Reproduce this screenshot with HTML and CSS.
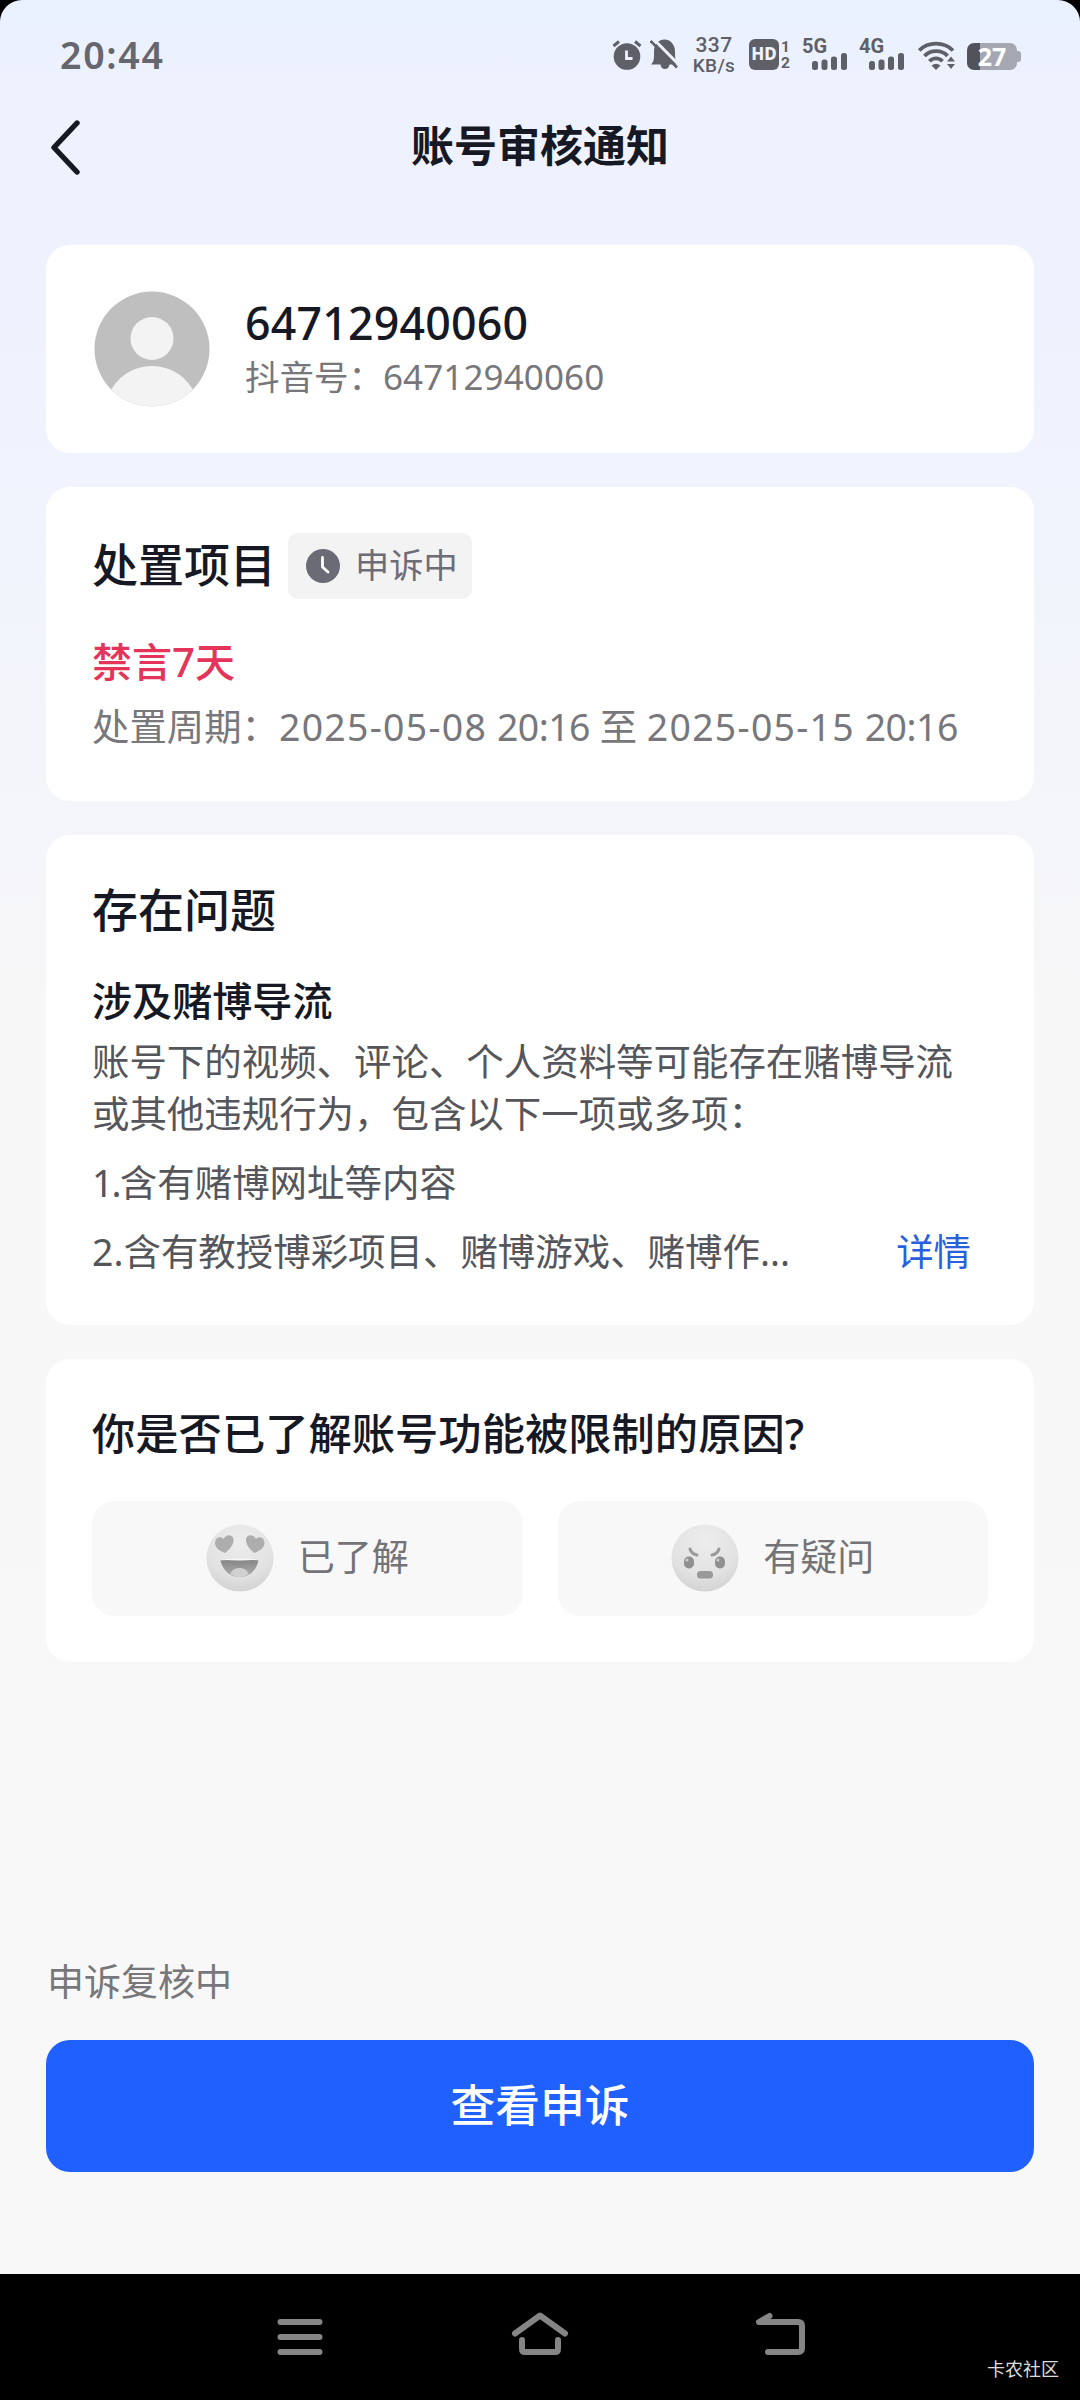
FILE: index.html
```html
<!DOCTYPE html>
<html lang="zh-CN">
<head>
<meta charset="utf-8">
<title>账号审核通知</title>
<link rel="stylesheet" href="styles.css">
</head>
<body>
<div class="phone">
  <main class="screen">
    <header class="status">
      <span class="time">20:44</span>
      <div class="indicators">
        <svg class="ico-alarm" width="30" height="30" viewBox="0 0 30 30"><circle cx="15" cy="16.5" r="13.3" fill="#5f5f68"/><path d="M1.500 6 7 1.500M28.500 6 23 1.500" stroke="#5f5f68" stroke-width="3"/><path d="M14.500 10.500v8h6" fill="none" stroke="#eef1fe" stroke-width="2.800"/></svg>
        <svg class="ico-mute" width="28" height="31" viewBox="0 0 28 31"><path d="M1 25.500C4.500 22 4 19 4 12.500 4 4.500 9 .5 14.500 .5S25 5 25 12.500c0 7 .5 10 3 13h-8.500c-.5 6-8.500 6-9 0z" fill="#5f5f68"/><path d="M3 -.5 29.500 26.500" stroke="#eef1fe" stroke-width="3"/><path d="M.5 2 27 28.500" stroke="#5f5f68" stroke-width="2.600"/></svg>
        <div class="speed"><span class="speed-num">337</span><span class="speed-unit">KB/s</span></div>
        <div class="hd"><span class="hd-box">HD</span><span class="hd-sims"><i>1</i><i>2</i></span></div>
        <div class="net"><span class="net-type">5G</span><svg width="36" height="17" viewBox="0 0 36 17" fill="#5f5f68"><rect x="0" y="8" width="6" height="9" rx="2.500"/><rect x="9.500" y="6.500" width="6" height="10.500" rx="2.500"/><rect x="19" y="3.500" width="6" height="13.500" rx="2.500"/><rect x="29" y="0" width="6" height="17" rx="2.500"/></svg></div>
        <div class="net net-4g"><span class="net-type">4G</span><svg width="36" height="17" viewBox="0 0 36 17" fill="#5f5f68"><rect x="0" y="8" width="6" height="9" rx="2.500"/><rect x="9.500" y="6.500" width="6" height="10.500" rx="2.500"/><rect x="19" y="3.500" width="6" height="13.500" rx="2.500"/><rect x="29" y="0" width="6" height="17" rx="2.500"/></svg></div>
        <svg class="ico-wifi" width="37" height="29" viewBox="0 0 37 29"><g fill="none" stroke="#5f5f68" stroke-width="3.800"><path d="M1.200 9.500C10 .2 26 .2 35 9.500"/><path d="M6.500 15C12.500 8.500 24 8.500 29.500 15"/><path d="M11.500 20.300C15 16.300 21 16.300 24.500 20.300"/></g><path d="M13.500 24.500q4.500-3.500 9 0L18 29z" fill="#5f5f68"/><path d="m33 15.500 4 5h-8zM33 28l4-5h-8z" fill="#5f5f68"/></svg>
        <div class="battery"><span class="battery-body">27</span><span class="battery-cap"></span></div>
      </div>
    </header>
    <nav class="titlebar">
      <svg class="back" width="32" height="56" viewBox="0 0 32 56"><path d="M27 4 4 28.500 27 53" fill="none" stroke="#161823" stroke-width="5.400" stroke-linecap="round" stroke-linejoin="round"/></svg>
      <h1>账号审核通知</h1>
    </nav>

    <section class="card profile">
      <svg class="avatar" width="116" height="116" viewBox="0 0 116 116"><defs><clipPath id="disc"><circle cx="58" cy="58" r="57.500"/></clipPath></defs><g clip-path="url(#disc)"><rect width="116" height="116" fill="#bfbfbf"/><circle cx="58" cy="47.500" r="21.500" fill="#f3f3f3"/><circle cx="58" cy="122" r="47" fill="#f3f3f3"/></g></svg>
      <div class="who"><strong>64712940060</strong><span>抖音号：<b>64712940060</b></span></div>
    </section>

    <section class="card penalty">
      <div class="heading-row">
        <h2>处置项目</h2>
        <span class="badge"><svg width="34" height="34" viewBox="0 0 34 34"><circle cx="17" cy="17" r="17" fill="#6a6b75"/><path d="M16.500 8.500v9.500l5.500 5" fill="none" stroke="#fff" stroke-width="2.800" stroke-linecap="round" stroke-linejoin="round"/></svg><span>申诉中</span></span>
      </div>
      <p class="ban">禁言7天</p>
      <p class="period">处置周期：<span class="date">2025-05-08</span> <span class="clock">20:16</span> 至 <span class="date">2025-05-15</span> <span class="clock">20:16</span></p>
    </section>

    <section class="card issues">
      <h2>存在问题</h2>
      <h3>涉及赌博导流</h3>
      <p class="desc">账号下的视频、评论、个人资料等可能存在赌博导流<br>或其他违规行为，包含以下一项或多项：</p>
      <p class="item"><span class="one">1.</span>含有赌博网址等内容</p>
      <div class="item last"><span>2.含有教授博彩项目、赌博游戏、赌博作...</span><a class="detail">详情</a></div>
    </section>

    <section class="card survey">
      <h2>你是否已了解账号功能被限制的原因?</h2>
      <div class="choices">
        <button class="choice"><svg width="68" height="68" viewBox="0 0 68 68"><defs><radialGradient id="face" cx=".5" cy=".25" r=".8"><stop offset="0" stop-color="#ededed"/><stop offset=".65" stop-color="#e2e2e2"/><stop offset="1" stop-color="#d0d0d0"/></radialGradient><linearGradient id="mouth" x2="0" y2="1"><stop offset="0" stop-color="#858585"/><stop offset="1" stop-color="#b0b0b0"/></linearGradient></defs><circle cx="34" cy="34" r="33.500" fill="url(#face)"/><path d="M19 29C12 26.500 7.500 22 9.500 16.500c1.500-4 6-4 8-1.500 2-4.500 7.500-5 9.500-1.500 2 5-2 11-8 15.500z" fill="#adadad"/><path d="M48.500 29c7-2.500 11.500-7 9.500-12.500-1.500-4-6-4-8-1.500-2-4.500-7.500-5-9.500-1.500-2 5 2 11 8 15.500z" fill="#adadad"/><path d="M14.500 36.500c13-1.300 26-1.300 38 0C50 47 43 53 33.500 53S17 47 14.500 36.500z" fill="url(#mouth)"/><path d="M14.500 35.500c13-1.300 26-1.300 38 0-12 1.300-25 1.300-38 0z" fill="#f8f8f8"/><path d="M24.500 50c2-8 16-8 18 0-5 4-13 4-18 0z" fill="#d0d0d0"/></svg><span>已了解</span></button>
        <button class="choice"><svg width="68" height="68" viewBox="0 0 68 68"><circle cx="34" cy="34" r="33.500" fill="url(#face)"/><path d="M19 25q1.500 5 7 6M48 25q-1.500 5-7 6" fill="none" stroke="#9a9a9a" stroke-width="3" stroke-linecap="round"/><rect x="13" y="32.500" width="10" height="12" rx="4.800" fill="#909090"/><rect x="44" y="32.500" width="10" height="12" rx="4.800" fill="#909090"/><circle cx="16" cy="36" r="1.500" fill="#ccc"/><circle cx="47" cy="36" r="1.500" fill="#ccc"/><rect x="26" y="47" width="16" height="7.500" rx="3.500" fill="#999"/></svg><span>有疑问</span></button>
      </div>
    </section>

    <footer class="action">
      <p>申诉复核中</p>
      <button class="primary">查看申诉</button>
    </footer>
  </main>
  <div class="navbar">
    <svg width="48" height="48" viewBox="0 0 48 48"><path d="M4.500 12h39M4.500 27h39M4.500 42h39" stroke="#858585" stroke-width="6" stroke-linecap="round"/></svg>
    <svg width="60" height="48" viewBox="0 0 60 48"><path d="M5 23.500 30 5.500l25 18M12 30v9q0 3 3 3h30q3 0 3-3v-9" fill="none" stroke="#858585" stroke-width="6" stroke-linecap="round" stroke-linejoin="round"/></svg>
    <svg width="52" height="48" viewBox="0 0 52 48"><path d="M14.500 6 4 12h39q4 0 4 4v22q0 4-4 4H13" fill="none" stroke="#858585" stroke-width="6" stroke-linecap="round" stroke-linejoin="round"/></svg>
  </div>
  <span class="watermark">卡农社区</span>
</div>
</body>
</html>
```
FILE: styles.css
```css
* { box-sizing: border-box; margin: 0; padding: 0; }
body { background: #000; font-family: "Noto Sans", "Noto Sans CJK SC", sans-serif; color: #161823; }
svg { display: block; flex: none; }
i { font-style: normal; }
button { border: 0; font: inherit; }

.phone { position: relative; width: 1080px; height: 2400px; display: flex; flex-direction: column; background: #000; overflow: hidden; }
.screen { height: 2274px; display: flex; flex-direction: column; padding: 0 46px; border-radius: 22px 22px 0 0;
  background: linear-gradient(#e9f1ff 0, #eef1fe 85px, #f0f3fe 420px, #f7f7f8 1000px, #f8f8f8 100%); }

.status { height: 110px; display: flex; justify-content: space-between; color: #5f5f68; margin-right: -26px; }
.time { margin: 36px 0 0 14px; font-size: 37.500px; line-height: 38px; font-weight: 600; letter-spacing: 1.700px; color: #66666e; }
.indicators { display: flex; align-items: flex-start; width: 448px; padding-top: 39px; }
.ico-alarm { margin-top: 1px; }
.ico-mute { margin-left: 8px; }
.speed { margin: -4px 0 0 13px; width: 46px; display: flex; flex-direction: column; align-items: center; font-family: Roboto, sans-serif; font-weight: 500; white-space: nowrap; }
.speed-num { font-size: 21px; line-height: 20px; letter-spacing: .4px; }
.speed-unit { font-size: 19px; line-height: 21px; letter-spacing: .3px; }
.hd { display: flex; margin-left: 12px; }
.hd-box { width: 30px; height: 31px; border-radius: 6px; background: #5f5f68; color: #eef1fe; font-size: 17px; line-height: 30px; font-weight: 800; text-align: center; }
.hd-sims { display: flex; flex-direction: column; width: 13px; padding-left: 2px; font-family: Roboto, sans-serif; font-size: 15.500px; line-height: 16px; font-weight: 700; }
.net { width: 46px; margin-left: 10px; display: flex; flex-direction: column; }
.net-4g { margin-left: 11px; }
.net-type { font-family: Roboto, sans-serif; font-size: 20px; font-weight: 700; line-height: 14px; }
.net svg { margin-left: 10px; }
.ico-wifi { margin: 2px 0 0 13px; }
.battery { display: flex; align-items: center; margin: 4px 0 0 12px; }
.battery-body { width: 50px; height: 27px; border-radius: 7px; background: linear-gradient(90deg, #52525b 13px, #a5a8b2 13px); color: #fff; font-size: 25px; line-height: 27px; font-weight: 700; text-align: center; }
.battery-cap { width: 4px; height: 11px; border-radius: 0 3px 3px 0; background: #a5a8b2; }

.titlebar { height: 135px; display: grid; grid-template-columns: 40px 1fr 40px; align-items: start; padding-top: 8px; }
.back { margin: 1px 0 0 4px; }
h1 { font-size: 43px; line-height: 56px; font-weight: 700; text-align: center; }

.card { background: #fff; border-radius: 24px; padding: 0 46px; margin-bottom: 34px; white-space: nowrap; }
h2 { font-weight: 500; font-size: 46px; line-height: 60px; }

.profile { height: 208px; display: flex; align-items: center; gap: 35px; }
.avatar { margin-left: 2px; }
.who { display: flex; flex-direction: column; margin-top: -4px; }
.who strong { font-size: 44.700px; line-height: 60px; font-weight: 500; letter-spacing: .2px; }
.who span { font-size: 34.500px; line-height: 48px; color: #77777b; }
.who b { font-weight: 400; font-size: 35px; letter-spacing: .1px; }

.penalty { height: 314px; padding-top: 46px; }
.heading-row { display: flex; align-items: center; gap: 12px; }
.heading-row h2 { margin-top: -4px; }
.badge { display: flex; align-items: center; gap: 15px; height: 66px; width: 184px; padding-left: 18px; border-radius: 10px; background: #f3f3f4; color: #6c6d76; font-size: 34.200px; }
.badge span { margin-top: -6px; }
.ban { font-size: 40px; line-height: 60px; font-weight: 500; color: #e4345a; margin-top: 33px; }
.period { font-size: 37.400px; line-height: 52px; margin-top: 9px; color: #77777c; }
.date { letter-spacing: 1.300px; }
.clock { letter-spacing: -.5px; }

.issues { height: 490px; padding-top: 44px; }
.issues h3 { font-size: 40.100px; line-height: 56px; font-weight: 500; margin-top: 34px; }
.desc { font-size: 37.450px; line-height: 52px; color: #55565b; margin-top: 7px; }
.item { font-size: 37.450px; line-height: 52px; color: #55565b; margin-top: 17px; }
.one { letter-spacing: -1.800px; }
.last { display: flex; justify-content: space-between; padding-right: 17px; }
.detail { color: #2961dc; }

.survey { height: 303px; padding-top: 45px; }
.survey h2 { font-size: 43.300px; }
.choices { display: grid; grid-template-columns: 1fr 1fr; gap: 35px; margin-top: 37px; }
.choice { height: 115px; border-radius: 22px; background: #f8f8f8; display: flex; align-items: center; justify-content: center; gap: 24px; color: #737378; font-size: 37px; }
.choice svg { margin-top: -2px; }
.choice span { line-height: 52px; margin-top: -4px; }

.action { margin-top: auto; height: 319px; display: flex; flex-direction: column; }
.action p { font-size: 37px; line-height: 52px; color: #77777b; padding: 1px 0 0 1px; }
.primary { height: 132px; margin-top: 32px; padding-bottom: 7px; border-radius: 24px; background: #1f60ff; color: #fff; font-size: 44.700px; font-weight: 500; }

.navbar { height: 126px; display: flex; justify-content: space-between; padding: 36px 273px 0 276px; background: #000; }
.watermark { position: absolute; right: 21px; bottom: 17px; color: #ddd; font-size: 18px; line-height: 28px; }
```
